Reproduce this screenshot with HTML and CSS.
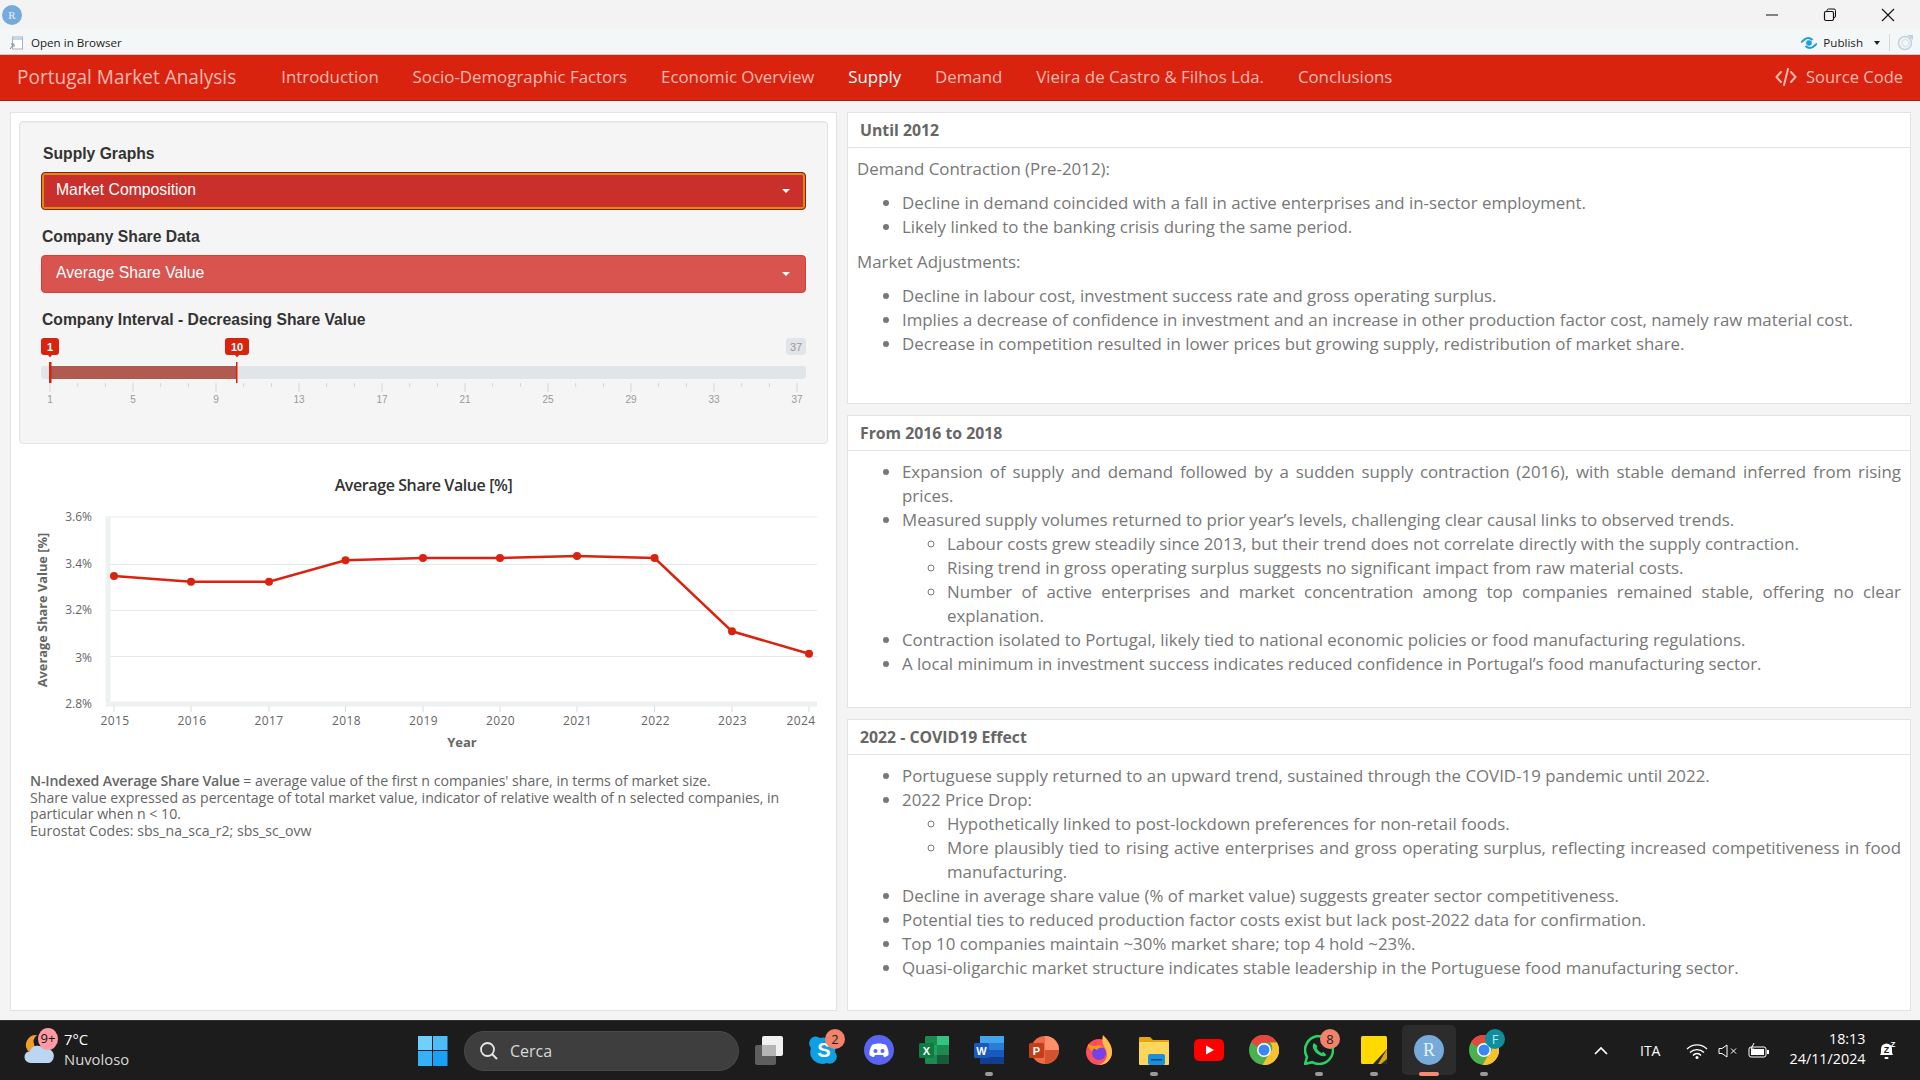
FILE: index.html
```html
<!DOCTYPE html>
<html lang="en">
<head>
<meta charset="utf-8">
<title>Portugal Market Analysis</title>
<link rel="stylesheet" href="styles.css">
</head>
<body>
<div class="titlebar">
  <span class="r-mini">R</span>
  <div class="winbtns">
    <svg width="14" height="14" viewBox="0 0 14 14"><path d="M1 7h12" stroke="#111" fill="none"/></svg>
    <svg width="14" height="14" viewBox="0 0 14 14"><rect x="1.5" y="3.5" width="9" height="9" rx="1.5" stroke="#111" stroke-width="1.2" fill="none"/><path d="M4 3V2.5A1.5 1.5 0 0 1 5.500 1H11A1.500 1.500 0 0 1 12.500 2.500V8A1.500 1.500 0 0 1 11 9.500" stroke="#111" fill="none"/></svg>
    <svg width="14" height="14" viewBox="0 0 14 14"><path d="M1 1l12 12M13 1L1 13" stroke="#111" stroke-width="1.100" fill="none"/></svg>
  </div>
</div>
<div class="toolbar">
  <div class="open-browser">
    <svg width="14" height="14" viewBox="0 0 14 14"><rect x="3.500" y="1" width="10" height="12" fill="#fff" stroke="#a9b2bb"/><rect x="4" y="1.500" width="9" height="2.500" fill="#bcd7ee"/><path d="M1 13l3-4M2 8h3v3" stroke="#7b8793" fill="none"/></svg>
    <span>Open in Browser</span>
  </div>
  <div class="publish">
    <svg width="18" height="14" viewBox="0 0 18 14"><path d="M1 6c2 0 3-4 7-4 2.500 0 3.500 1 4.500 2M17 8c-2 0-3 4-7 4-2.500 0-3.500-1-4.500-2" stroke="#1a9fe3" stroke-width="2" fill="none"/><circle cx="9" cy="7" r="2.800" fill="#1a9fe3"/></svg>
    <span class="pub-text">Publish</span>
    <span class="pub-caret"></span>
    <span class="pub-sep"></span>
    <svg width="17" height="17" viewBox="0 0 17 17"><circle cx="8" cy="9" r="6.500" stroke="#c3d0de" stroke-width="1.500" fill="none"/><circle cx="8.500" cy="9" r="3.500" stroke="#dbe3eb" stroke-width="1.500" fill="none"/><path d="M10 1h6v5z" fill="#c3d0de"/></svg>
  </div>
</div>
<nav class="navbar">
  <span class="brand">Portugal Market Analysis</span>
  <ul class="navlinks">
    <li>Introduction</li>
    <li>Socio-Demographic Factors</li>
    <li>Economic Overview</li>
    <li class="active">Supply</li>
    <li>Demand</li>
    <li>Vieira de Castro &amp; Filhos Lda.</li>
    <li>Conclusions</li>
  </ul>
  <span class="source">
    <svg width="22" height="18" viewBox="0 0 22 18"><path d="M6 4L1.500 9 6 14M16 4l4.500 5L16 14M13 1L9 17" stroke="currentColor" stroke-width="2" fill="none" stroke-linecap="round" stroke-linejoin="round"/></svg>
    Source Code
  </span>
</nav>
<main class="content">
  <section class="left-card">
    <div class="well">
      <div class="field-label first">Supply Graphs</div>
      <div class="select focused">Market Composition<span class="caret"></span></div>
      <div class="field-label second">Company Share Data</div>
      <div class="select plain">Average Share Value<span class="caret"></span></div>
      <div class="field-label third">Company Interval - Decreasing Share Value</div>
      <svg class="slider" width="765" height="70" viewBox="41 335 765 70">
        <rect x="41" y="366" width="765" height="13" rx="3" fill="#e1e4e9"/>
        <rect x="50" y="366" width="187" height="13" fill="#b05a50"/>
        <rect x="49" y="362" width="2.500" height="21" fill="#d9230f"/>
        <rect x="236" y="362" width="1.500" height="21" fill="#d9230f"/>
        <rect x="41" y="338" width="18" height="17" rx="3" fill="#d9230f"/>
        <path d="M48 355h4l-2 2.500z" fill="#d9230f"/>
        <text x="50" y="351" class="badge">1</text>
        <rect x="225" y="338" width="24" height="17" rx="3" fill="#d9230f"/>
        <path d="M235 355h4l-2 2.500z" fill="#d9230f"/>
        <text x="237" y="351" class="badge">10</text>
        <rect x="786" y="338" width="20" height="17" rx="3" fill="#e1e4e9"/>
        <text x="796" y="351" class="badge-max">37</text>
        <path d="M50 383v9M77.700 383v4M105.400 383v4M133 383v9M160.700 383v4M188.400 383v4M216 383v9M243.700 383v4M271.400 383v4M299 383v9M326.700 383v4M354.400 383v4M382 383v9M409.700 383v4M437.400 383v4M465 383v9M492.700 383v4M520.400 383v4M548 383v9M575.700 383v4M603.400 383v4M631 383v9M658.700 383v4M686.400 383v4M714 383v9M741.700 383v4M769.400 383v4M797 383v9" stroke="#d4d7db" fill="none"/>
        <g class="slider-tick">
          <text x="50" y="403">1</text><text x="133" y="403">5</text><text x="216" y="403">9</text><text x="299" y="403">13</text><text x="382" y="403">17</text><text x="465" y="403">21</text><text x="548" y="403">25</text><text x="631" y="403">29</text><text x="714" y="403">33</text><text x="797" y="403">37</text>
        </g>
      </svg>
    </div>
    <svg class="chart" width="805" height="290" viewBox="20 470 805 290">
      <text x="423.500" y="491" class="chart-title">Average Share Value [%]</text>
      <path d="M108 517H817M108 564.500H817M108 610.500H817M108 656.500H817" stroke="#e6e9ec" stroke-width="1" fill="none"/>
      <path d="M108 516.500V702" stroke="#eef1f2" stroke-width="5" fill="none"/>
      <path d="M106 704H817" stroke="#eef1f2" stroke-width="5" fill="none"/>
      <path d="M114 706v6M191 706v6M269 706v6M345.500 706v6M423 706v6M500 706v6M577 706v6M654.500 706v6M732 706v6M809 706v6" stroke="#d8dde1" fill="none"/>
      <g class="y-tick">
        <text x="92" y="521">3.6%</text><text x="92" y="568">3.4%</text><text x="92" y="614">3.2%</text><text x="92" y="662">3%</text><text x="92" y="708">2.8%</text>
      </g>
      <g class="x-tick">
        <text x="115" y="725">2015</text><text x="192" y="725">2016</text><text x="269" y="725">2017</text><text x="346.500" y="725">2018</text><text x="423.500" y="725">2019</text><text x="500.500" y="725">2020</text><text x="577.500" y="725">2021</text><text x="655.500" y="725">2022</text><text x="732.500" y="725">2023</text><text x="801" y="725">2024</text>
      </g>
      <text x="462" y="747" class="axis-title">Year</text>
      <text transform="translate(47 610) rotate(-90)" class="axis-title-y">Average Share Value [%]</text>
      <polyline points="114,576 191,581.700 269,581.700 345.500,560.300 423,558 500,558 577,556 654.600,558 732,631.300 809,653.700" fill="none" stroke="#d9230f" stroke-width="2.500"/>
      <g fill="#d9230f">
        <circle cx="114" cy="576" r="4"/><circle cx="191" cy="581.700" r="4"/><circle cx="269" cy="581.700" r="4"/><circle cx="345.500" cy="560.300" r="4"/><circle cx="423" cy="558" r="4"/><circle cx="500" cy="558" r="4"/><circle cx="577" cy="556" r="4"/><circle cx="654.600" cy="558" r="4"/><circle cx="732" cy="631.300" r="4"/><circle cx="809" cy="653.700" r="4"/>
      </g>
    </svg>
    <div class="note">
      <strong>N-Indexed Average Share Value</strong> = average value of the first n companies' share, in terms of market size.<br>
      Share value expressed as percentage of total market value, indicator of relative wealth of n selected companies, in particular when n &lt; 10.<br>
      Eurostat Codes: sbs_na_sca_r2; sbs_sc_ovw
    </div>
  </section>
  <section class="right-col">
    <article class="card">
      <header class="card-head">Until 2012</header>
      <div class="card-body">
        <p>Demand Contraction (Pre-2012):</p>
        <ul>
          <li>Decline in demand coincided with a fall in active enterprises and in-sector employment.</li>
          <li>Likely linked to the banking crisis during the same period.</li>
        </ul>
        <p>Market Adjustments:</p>
        <ul>
          <li>Decline in labour cost, investment success rate and gross operating surplus.</li>
          <li>Implies a decrease of confidence in investment and an increase in other production factor cost, namely raw material cost.</li>
          <li>Decrease in competition resulted in lower prices but growing supply, redistribution of market share.</li>
        </ul>
      </div>
    </article>
    <article class="card">
      <header class="card-head">From 2016 to 2018</header>
      <div class="card-body">
        <ul>
          <li>Expansion of supply and demand followed by a sudden supply contraction (2016), with stable demand inferred from rising prices.</li>
          <li>Measured supply volumes returned to prior year’s levels, challenging clear causal links to observed trends.
            <ul>
              <li>Labour costs grew steadily since 2013, but their trend does not correlate directly with the supply contraction.</li>
              <li>Rising trend in gross operating surplus suggests no significant impact from raw material costs.</li>
              <li>Number of active enterprises and market concentration among top companies remained stable, offering no clear explanation.</li>
            </ul>
          </li>
          <li>Contraction isolated to Portugal, likely tied to national economic policies or food manufacturing regulations.</li>
          <li>A local minimum in investment success indicates reduced confidence in Portugal’s food manufacturing sector.</li>
        </ul>
      </div>
    </article>
    <article class="card">
      <header class="card-head">2022 - COVID19 Effect</header>
      <div class="card-body">
        <ul>
          <li>Portuguese supply returned to an upward trend, sustained through the COVID-19 pandemic until 2022.</li>
          <li>2022 Price Drop:
            <ul>
              <li>Hypothetically linked to post-lockdown preferences for non-retail foods.</li>
              <li>More plausibly tied to rising active enterprises and gross operating surplus, reflecting increased competitiveness in food manufacturing.</li>
            </ul>
          </li>
          <li>Decline in average share value (% of market value) suggests greater sector competitiveness.</li>
          <li>Potential ties to reduced production factor costs exist but lack post-2022 data for confirmation.</li>
          <li>Top 10 companies maintain ~30% market share; top 4 hold ~23%.</li>
          <li>Quasi-oligarchic market structure indicates stable leadership in the Portuguese food manufacturing sector.</li>
        </ul>
      </div>
    </article>
  </section>
</main>
<footer class="taskbar">
  <div class="weather">
    <div class="weather-icon">
      <svg width="32" height="36" viewBox="0 0 32 36"><path d="M13 3a9 9 0 0 0 6 16H4A10 10 0 0 1 13 3z" fill="#f0a02a"/><path d="M7 31a6 6 0 0 1-1-12 8 8 0 0 1 14-2 6.500 6.500 0 0 1 5 14z" fill="#bcd6f2"/></svg>
      <span class="wbadge">9+</span>
    </div>
    <div class="weather-text"><span class="temp">7°C</span><span class="cond">Nuvoloso</span></div>
  </div>
  <svg class="start" width="30" height="30" viewBox="0 0 30 30"><rect width="14" height="14" fill="#6fd0fb"/><rect x="15" width="14.500" height="14" fill="#4cbdf8"/><rect y="15" width="14" height="15" fill="#33b2f8"/><rect x="15" y="15" width="14.500" height="15" fill="#1aa0f5"/></svg>
  <div class="search">
    <svg width="20" height="20" viewBox="0 0 20 20"><circle cx="8.500" cy="8.500" r="6.500" stroke="#e6e6e6" stroke-width="1.800" fill="none"/><path d="M13 13l5 5" stroke="#e6e6e6" stroke-width="2" fill="none"/></svg>
    <span>Cerca</span>
  </div>
  <div class="apps">
    <div class="app"><svg width="30" height="30" viewBox="0 0 30 30"><rect x="1" y="10" width="21" height="20" rx="2" fill="#5e5e5e"/><rect x="8" y="1" width="21" height="20" rx="2" fill="#f0f0f0"/><rect x="8" y="10" width="14" height="11" fill="#b5b5b5"/></svg></div>
    <div class="app"><svg width="30" height="30" viewBox="0 0 30 30"><path d="M4 2a7 7 0 0 1 7 1 12 12 0 0 1 15 14 7 7 0 0 1-8 11A12 12 0 0 1 2 13 7 7 0 0 1 4 2z" fill="#0f9fe3"/><text x="15" y="22" class="s-letter">S</text></svg><span class="bubble">2</span></div>
    <div class="app"><svg width="30" height="30" viewBox="0 0 30 30"><circle cx="15" cy="15" r="15" fill="#5865f2"/><path d="M8 10c4-2 10-2 14 0 2 3 3 7 2.500 10-2 1.500-3 2-4.500 2l-1-2h-8l-1 2c-1.500 0-2.500-.500-4.500-2C5 17 6 13 8 10z" fill="#fff"/><circle cx="11.500" cy="16" r="2" fill="#5865f2"/><circle cx="18.500" cy="16" r="2" fill="#5865f2"/></svg></div>
    <div class="app"><svg width="30" height="30" viewBox="0 0 30 30"><rect x="6" y="1" width="24" height="28" rx="1.500" fill="#1d8a50"/><rect x="18" y="1" width="12" height="9" fill="#33c481"/><rect x="6" y="10" width="12" height="10" fill="#21a366"/><rect x="18" y="20" width="12" height="9" fill="#185c37"/><rect y="8" width="15" height="15" rx="1.500" fill="#107c41"/><text x="7.500" y="20" class="ms-letter">X</text></svg></div>
    <div class="app dot"><svg width="30" height="30" viewBox="0 0 30 30"><rect x="6" y="1" width="24" height="28" rx="1.500" fill="#2b7cd3"/><rect x="6" y="1" width="24" height="7" fill="#41a5ee"/><rect x="6" y="15" width="24" height="7" fill="#185abd"/><rect x="6" y="22" width="24" height="7" fill="#103f91"/><rect y="8" width="15" height="15" rx="1.500" fill="#185abd"/><text x="7.500" y="20" class="ms-letter">W</text></svg></div>
    <div class="app"><svg width="30" height="30" viewBox="0 0 30 30"><circle cx="16" cy="15" r="14" fill="#ed6c47"/><path d="M16 1a14 14 0 0 1 14 14H16z" fill="#ff8f6b"/><path d="M16 15h14a14 14 0 0 1-14 14z" fill="#d35230"/><rect y="8" width="15" height="15" rx="1.500" fill="#c43e1c"/><text x="7.500" y="20" class="ms-letter">P</text></svg></div>
    <div class="app"><svg width="30" height="30" viewBox="0 0 30 30"><circle cx="15" cy="17" r="13" fill="#ff4f5e"/><path d="M19 0c5 5 9 10 9 17a13 13 0 0 1-13 13c8-3 9-10 7-15-2-4-5-8-3-15z" fill="#ffbd4f"/><path d="M4 9c2 1 3 2 8 2 5-1 8 2 8 6 0-3-6-3-10-1-3 1-6-3-6-7z" fill="#ff980e"/><circle cx="15" cy="18" r="7" fill="#7542e5"/><path d="M9 13c3-4 9-3 11 0-3-1-6 0-7 2z" fill="#ff980e"/></svg></div>
    <div class="app dot"><svg width="30" height="30" viewBox="0 0 30 30"><path d="M0 3a1 1 0 0 1 1-1h10l3 3h16v24H0z" fill="#e2a80f"/><rect y="7" width="30" height="23" rx="1" fill="#ffd65c"/><rect x="9" y="19" width="17" height="11" rx="2" fill="#1c8fdc"/><rect x="12" y="24" width="11" height="1.500" fill="#0b4f87"/></svg></div>
    <div class="app"><svg width="30" height="30" viewBox="0 0 30 30"><rect y="4" width="30" height="22" rx="5" fill="#f00"/><path d="M12 10.500l8 4.500-8 4.500z" fill="#fff"/></svg></div>
    <div class="app"><svg width="30" height="30" viewBox="0 0 30 30"><use href="#chrome-icon"/></svg></div>
    <div class="app dot"><svg width="30" height="30" viewBox="0 0 30 30"><path d="M15 1a14 14 0 0 1 0 28c-2.500 0-5-.700-7-1.800L1 29l2-7A14 14 0 0 1 15 1z" fill="none" stroke="#25d366" stroke-width="2.500"/><path d="M10 8c-3 3 0 8 3 10.500s7 4 9.500 1.500l-3-3-2 1c-2-1-4-3-5-5l1-2z" fill="#25d366"/></svg><span class="bubble">8</span></div>
    <div class="app dot"><svg width="30" height="30" viewBox="0 0 30 30"><rect x="2" y="1" width="26" height="28" rx="1.500" fill="#ffd900"/><path d="M28 14v15H14z" fill="#2b2b2b"/><path d="M28 14v10L22 29h-3z" fill="#d9a514"/></svg></div>
    <div class="app current"><svg width="30" height="30" viewBox="0 0 30 30"><circle cx="15" cy="15" r="15" fill="#75aadb"/><text x="15" y="21" class="r-letter">R</text></svg></div>
    <div class="app dot"><svg width="30" height="30" viewBox="0 0 30 30"><use href="#chrome-icon"/></svg><span class="bubble teal">F</span></div>
  </div>
  <div class="tray">
    <svg class="chev" width="16" height="10" viewBox="0 0 16 10"><path d="M2 8l6-6 6 6" stroke="#fff" stroke-width="1.700" fill="none"/></svg>
    <span class="lang">ITA</span>
    <svg class="wifi" width="22" height="16" viewBox="0 0 22 16"><path d="M1 6a14 14 0 0 1 20 0M4 9.500a10 10 0 0 1 14 0M7 12.500a5 5 0 0 1 8 0" stroke="#fff" stroke-width="1.300" fill="none"/><circle cx="11" cy="14.500" r="1.500" fill="#fff"/></svg>
    <svg class="speaker" width="20" height="14" viewBox="0 0 20 14"><path d="M1 4.500h3L9 1v12L4 9.500H1z" stroke="#fff" fill="none"/><path d="M13 4.500l5 5M18 4.500l-5 5" stroke="#fff" fill="none"/></svg>
    <svg class="battery" width="22" height="16" viewBox="0 0 22 16"><rect x="1" y="4" width="17" height="10" rx="2" stroke="#fff" fill="none"/><rect x="3" y="6" width="13" height="6" fill="#fff"/><rect x="19" y="7" width="2" height="4" fill="#fff"/><path d="M6 0L3 6h3L4 10" stroke="#fff" fill="none"/></svg>
    <div class="clock"><span>18:13</span><span>24/11/2024</span></div>
    <svg class="bell" width="18" height="20" viewBox="0 0 18 20"><path d="M2 14c1-1 1-3 1-6a5.500 5.500 0 0 1 11 0c0 3 0 5 1 6z" fill="#fff"/><rect x="6.500" y="16" width="4" height="2" rx="1" fill="#fff"/><text x="8.500" y="12" class="zz">Z</text><text x="15" y="6" class="zz-w">Z</text></svg>
  </div>
</footer>
<svg class="defs" width="0" height="0" aria-hidden="true">
  <defs>
    <g id="chrome-icon">
      <circle cx="15" cy="15" r="15" fill="#4caf50"/>
      <path d="M15 0a15 15 0 0 1 13 7.500H15a7.500 7.500 0 0 0-7 4.500L2 7A15 15 0 0 1 15 0z" fill="#e8453c"/>
      <path d="M28 7.500A15 15 0 0 1 13.500 30l6.500-11a7.500 7.500 0 0 0 1-11.500z" fill="#fbc02d"/>
      <circle cx="15" cy="15" r="7" fill="#fff"/>
      <circle cx="15" cy="15" r="5.500" fill="#3d84f5"/>
    </g>
  </defs>
</svg>
</body>
</html>
```

FILE: styles.css
```css
* { box-sizing: border-box; }
html, body { margin: 0; padding: 0; }
body {
  width: 1920px;
  height: 1080px;
  overflow: hidden;
  display: flex;
  flex-direction: column;
  background: #f4f4f4;
  font-family: "Open Sans", sans-serif;
  color: #777;
}

/* window chrome */
.titlebar {
  height: 29px;
  flex: none;
  background: #f3f3f3;
  display: flex;
  align-items: center;
  justify-content: space-between;
  padding: 0 25px 0 2px;
}
.r-mini {
  width: 20px;
  height: 20px;
  border-radius: 50%;
  background: #75aadb;
  color: #e8f1f9;
  font: 11px "Liberation Serif", serif;
  display: flex;
  align-items: center;
  justify-content: center;
}
.winbtns { display: flex; gap: 44px; align-items: center; }

.toolbar {
  height: 26px;
  flex: none;
  background: #f4f7f8;
  border-bottom: 1px solid #c9ccce;
  display: flex;
  align-items: center;
  justify-content: space-between;
  padding: 2px 6px 0 9px;
  color: #222;
  font-size: 11.600px;
}
.open-browser { display: flex; align-items: center; gap: 8px; }
.publish { display: flex; align-items: center; }
.pub-text { margin-left: 5px; }
.pub-caret {
  margin-left: 11px;
  border: 3.500px solid transparent;
  border-top: 4px solid #222;
  border-bottom: 0;
}
.pub-sep { width: 1px; height: 17px; background: #d4d8db; margin: 0 7px 0 9px; }

.navbar {
  height: 46px;
  flex: none;
  background: #d9230f;
  border-bottom: 1px solid #a91b0c;
  display: flex;
  align-items: center;
  padding: 0 17px 2px;
  color: #f8b9b1;
  font-size: 16.850px;
}
.brand { font-size: 19.050px; margin-right: 45px; white-space: nowrap; }
.navlinks {
  list-style: none;
  display: flex;
  gap: 33.900px;
  margin: 0;
  padding: 0;
  flex: 1;
}
.navlinks .active { color: #fff; }
.source { display: flex; align-items: center; gap: 9px; font-size: 16.500px; }

/* page */
.content {
  flex: 1;
  min-height: 0;
  display: flex;
  gap: 10px;
  padding: 11px 9px 9px 10px;
}
.left-card {
  width: 827px;
  flex: none;
  background: #fff;
  border: 1px solid #e3e3e3;
  padding: 8px;
}
.well {
  height: 323px;
  background: #f5f5f5;
  border: 1px solid #e3e3e3;
  border-radius: 4px;
  padding: 22px 21px 0 21px;
  box-shadow: inset 0 1px 1px rgba(0,0,0,.05);
}
.field-label {
  height: 20px;
  padding-left: 1px;
  font: bold 15.700px/20px "Liberation Sans", sans-serif;
  color: #333;
}
.field-label.first { padding-left: 2px; margin-bottom: 8px; }
.field-label.second { margin: 17px 0 8px; }
.field-label.third { margin: 17px 0 5px; }
.select {
  height: 38px;
  border-radius: 4px;
  padding: 0 15px 2px 14px;
  display: flex;
  align-items: center;
  justify-content: space-between;
  color: #fff;
  font: 15.750px "Liberation Sans", sans-serif;
}
.select.focused {
  background: #c9302c;
  border: 1px solid #8a1f1a;
  box-shadow: inset 0 0 0 2px #e08a0e;
}
.select.plain { background: #d9534f; border: 1px solid #d43f3a; }
.caret {
  border: 4px solid transparent;
  border-top: 4px solid #fff;
  border-bottom: 0;
  margin-top: 2px;
}
.slider { display: block; }
.slider text { font-family: "Liberation Sans", sans-serif; text-anchor: middle; }
.badge { font-size: 11px; font-weight: bold; fill: #fff; }
.badge-max { font-size: 11px; fill: #999; }
.slider-tick { font-size: 10px; fill: #999; }

.chart { display: block; margin: 26px 0 0 1px; }
.chart text { font-family: "Open Sans", sans-serif; }
.chart-title { font-size: 16px; font-weight: 600; fill: #333; text-anchor: middle; letter-spacing: -.4px; }
.y-tick text { font-size: 12px; fill: #666; text-anchor: end; }
.x-tick text { font-size: 12px; fill: #666; text-anchor: middle; letter-spacing: .4px; }
.axis-title { font-size: 13px; font-weight: bold; fill: #666; text-anchor: middle; }
.axis-title-y { font-size: 12.800px; font-weight: bold; fill: #666; text-anchor: middle; }
.note {
  margin: 13px 0 0 11px;
  padding-right: 6px;
  font-size: 14.140px;
  line-height: 16.500px;
  color: #666;
}
.note strong { font-weight: 600; letter-spacing: -.15px; }

.right-col {
  flex: 1;
  min-width: 0;
  display: flex;
  flex-direction: column;
  gap: 11px;
}
.card {
  flex: 1;
  min-height: 0;
  background: #fff;
  border: 1px solid #e3e3e3;
  display: flex;
  flex-direction: column;
}
.card-head {
  height: 35px;
  flex: none;
  border-bottom: 1px solid #e3e3e3;
  padding: 0 12px;
  font-size: 15.800px;
  font-weight: 700;
  line-height: 35px;
  color: #666;
}
.card-body {
  padding: 9px 9px 0 9px;
  font-size: 16.850px;
  line-height: 24px;
  color: #777;
  text-align: justify;
}
.card-body p { margin: 0 0 10px; }
.card-body ul { margin: 0 0 11px; padding-left: 45px; }
.card-body ul ul { margin: 0; }

/* windows taskbar */
.taskbar {
  height: 60px;
  flex: none;
  background: #1c1c1c;
  border-top: 1px solid #333;
  display: flex;
  align-items: center;
  color: #fff;
  position: relative;
}
.weather { width: 418px; flex: none; display: flex; align-items: center; padding-left: 24px; }
.weather-icon { position: relative; width: 40px; height: 38px; }
.wbadge {
  position: absolute;
  left: 14px;
  top: -4px;
  width: 20px;
  height: 22px;
  border-radius: 50%;
  background: #ff9aa5;
  color: #111;
  font-size: 13px;
  line-height: 21px;
  text-align: center;
}
.weather-text { display: flex; flex-direction: column; font-size: 14.800px; line-height: 20px; margin-top: -3px; }
.cond { color: #d8d8d8; }
.start { flex: none; }
.search {
  width: 275px;
  height: 40px;
  flex: none;
  margin-left: 16px;
  background: #3e3e3e;
  border: 1px solid #4a4a4a;
  border-radius: 20px;
  display: flex;
  align-items: center;
  gap: 11px;
  padding-left: 14px;
  color: #d8d8d8;
  font-size: 16px;
}
.apps { display: flex; gap: 25px; margin-left: 15px; flex: none; }
.app { position: relative; width: 30px; height: 30px; margin-top: -2px; }
.app svg { display: block; }
.app.dot::after, .app.current::after {
  content: "";
  position: absolute;
  left: 11px;
  bottom: -11px;
  width: 8px;
  height: 4px;
  border-radius: 2px;
  background: #9a9a9a;
}
.app.current::before {
  content: "";
  position: absolute;
  left: -12px;
  top: -10px;
  width: 54px;
  height: 50px;
  border-radius: 5px;
  background: #2c2c2c;
}
.app.current svg { position: relative; }
.app.current::after { left: 5px; width: 20px; background: #f58d75; }
.bubble {
  position: absolute;
  right: -6px;
  top: -6px;
  width: 20px;
  height: 20px;
  border-radius: 50%;
  background: #f2826a;
  color: #222;
  font-size: 13px;
  line-height: 20px;
  text-align: center;
}
.bubble.teal { background: #0e8fa0; color: #bfe6ec; }
.s-letter { font: bold 20px "Liberation Sans", sans-serif; fill: #fff; text-anchor: middle; }
.ms-letter { font: bold 11px "Liberation Sans", sans-serif; fill: #fff; text-anchor: middle; }
.r-letter { font: 18px "Liberation Serif", serif; fill: #e8f1f9; text-anchor: middle; }
.tray { margin-left: 94px; display: flex; align-items: center; flex: none; }
.lang { font-size: 14px; margin-left: 31px; margin-right: 26px; }
.speaker { margin-left: 10px; }
.battery { margin-left: 10px; }
.clock {
  width: 92px;
  margin: -3px 0 0 3px;
  display: flex;
  flex-direction: column;
  align-items: flex-end;
  font-size: 14.300px;
  line-height: 20px;
}
.bell { margin-left: 13px; }
.zz { font: bold 9px "Liberation Sans", sans-serif; fill: #1c1c1c; text-anchor: middle; }
.zz-w { font: bold 8px "Liberation Sans", sans-serif; fill: #fff; text-anchor: middle; }
.defs { position: absolute; }
```
